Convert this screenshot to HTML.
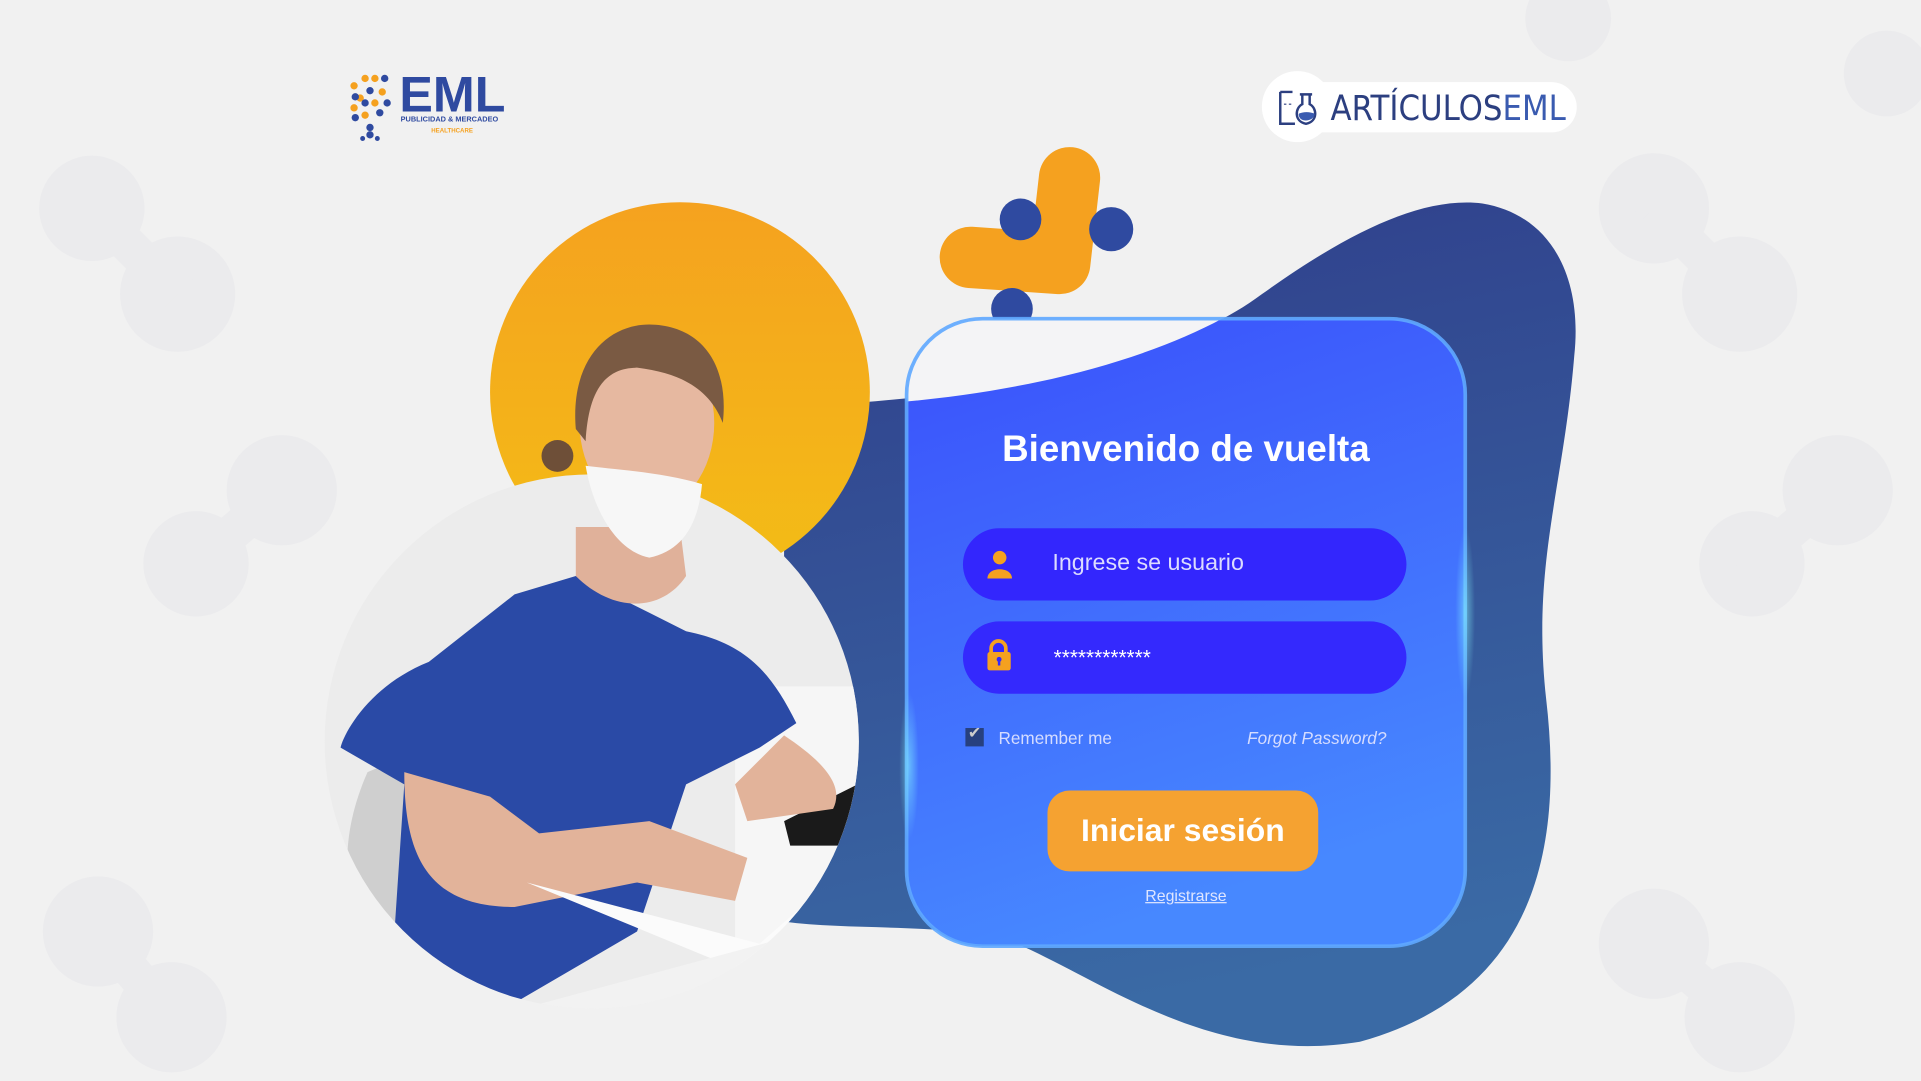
<!DOCTYPE html>
<html><head><meta charset="utf-8"><style>
html,body{margin:0;padding:0;width:1921px;height:1081px;overflow:hidden;background:#f1f1f1;}
#s{position:absolute;left:0;top:0;width:1568px;height:882px;transform:scale(1.22513,1.22562);transform-origin:0 0;font-family:"Liberation Sans",sans-serif;}
svg{position:absolute;left:0;top:0}
.t{position:absolute;color:#fff;white-space:nowrap}
</style></head><body><div id="s">
<svg width="1568" height="882" viewBox="0 0 1568 882">
<defs>
<linearGradient id="og" x1="0" y1="0" x2="0" y2="1"><stop offset="0" stop-color="#f5a21f"/><stop offset="1" stop-color="#f3bd16"/></linearGradient>
<linearGradient id="bg" x1="0" y1="0" x2="0.2" y2="1"><stop offset="0" stop-color="#2f3d8a"/><stop offset="1" stop-color="#3a6aa5"/></linearGradient>
<linearGradient id="cg" x1="0" y1="0" x2="0.3" y2="1"><stop offset="0" stop-color="#3a50fb"/><stop offset="1" stop-color="#4788ff"/></linearGradient>
<clipPath id="cc"><rect x="740" y="260" width="456" height="512" rx="62"/></clipPath>
<clipPath id="pc"><circle cx="483" cy="605" r="218"/></clipPath>
<radialGradient id="gl"><stop offset="0" stop-color="#8ff" stop-opacity=".5"/><stop offset="1" stop-color="#8ff" stop-opacity="0"/></radialGradient>
</defs>
<g fill="#ebebed" stroke="#ebebed" stroke-width="30">
<circle cx="75" cy="170" r="28"/><circle cx="145" cy="240" r="32"/><path d="M75 170 L145 240"/>
<circle cx="230" cy="400" r="30"/><circle cx="160" cy="460" r="28"/><path d="M230 400 L160 460"/>
<circle cx="80" cy="760" r="30"/><circle cx="140" cy="830" r="30"/><path d="M80 760 L140 830"/>
<circle cx="1350" cy="170" r="30"/><circle cx="1420" cy="240" r="32"/><path d="M1350 170 L1420 240"/>
<circle cx="1500" cy="400" r="30"/><circle cx="1430" cy="460" r="28"/><path d="M1500 400 L1430 460"/>
<circle cx="1350" cy="770" r="30"/><circle cx="1420" cy="830" r="30"/><path d="M1350 770 L1420 830"/>
<circle cx="1280" cy="15" r="20"/><circle cx="1540" cy="60" r="20"/>
</g>
<path d="M680 330 C800 322 950 300 1030 240 C1100 190 1160 160 1210 166 C1265 175 1292 225 1285 290 C1276 400 1250 460 1262 570 C1276 690 1255 810 1110 850 C990 870 900 800 830 770 C780 752 700 760 640 752 L640 440 Z" fill="url(#bg)"/>
<circle cx="555" cy="320" r="155" fill="url(#og)"/>
<path d="M873 145 L865 215 L792 210" stroke="#f5a11f" stroke-width="50" stroke-linecap="round" stroke-linejoin="round" fill="none"/>
<circle cx="833" cy="179" r="17" fill="#2f4aa0"/><circle cx="907" cy="187" r="18" fill="#2f4aa0"/><circle cx="826" cy="252" r="17" fill="#2f4aa0"/>
<rect x="740" y="260" width="456" height="512" rx="62" fill="url(#cg)"/>
<g clip-path="url(#cc)"><path d="M730 250 L1015 250 C950 290 850 318 735 328 Z" fill="#f4f4f6"/></g>
<rect x="740" y="260" width="456" height="512" rx="62" fill="none" stroke="#5fa8ff" stroke-width="3" opacity=".9"/>
<ellipse cx="1196" cy="500" rx="8" ry="70" fill="url(#gl)"/>
<ellipse cx="742" cy="625" rx="8" ry="60" fill="url(#gl)"/>
<g clip-path="url(#pc)"><rect x="260" y="380" width="450" height="450" fill="#ececec"/>
<rect x="600" y="560" width="110" height="270" fill="#f6f6f6"/>
<path d="M640 670 L700 640 L700 690 L645 690 Z" fill="#1a1a1a"/>
<path d="M300 630 C260 720 300 790 340 800 L380 800 L370 600 Z" fill="#cfcfcf"/>
<path d="M350 540 C300 560 280 600 278 610 L330 640 L320 790 L400 830 L520 760 L560 640 L620 610 L650 590 C630 550 610 525 560 515 L530 500 L470 470 L420 485 Z" fill="#2a4aa6"/>
<path d="M330 630 C330 700 350 740 420 740 L520 720 L600 735 L610 700 L530 670 L440 680 L400 650 Z" fill="#e2b39a"/>
<path d="M640 600 C670 620 690 640 680 660 L610 670 L600 640 Z" fill="#e2b39a"/>
<path d="M430 720 L620 770 L700 700 L700 760 L600 790 Z" fill="#fbfbfb"/>
<path d="M400 830 L660 760 L710 760 L710 830 Z" fill="#f2f2f2"/>
</g>
<path d="M470 430 L470 470 C500 500 540 500 560 470 L555 430 Z" fill="#e0b19a"/>
<ellipse cx="528" cy="345" rx="55" ry="72" fill="#e6b8a0"/>
<path d="M470 350 C465 290 500 262 535 265 C575 268 595 300 590 345 C580 320 560 305 520 300 C490 300 480 325 478 360 Z" fill="#7a5a43"/>
<circle cx="455" cy="372" r="13" fill="#6e4f38"/>
<path d="M478 380 C500 383 540 385 573 395 C570 430 555 450 530 455 C505 450 485 420 478 380 Z" fill="#f7f7f7"/>
<g transform="translate(284,60)">
<g fill="#f5a11f"><circle cx="5" cy="10" r="3"/><circle cx="14" cy="4" r="3"/><circle cx="22" cy="4" r="3"/><circle cx="10" cy="20" r="3"/><circle cx="28" cy="15" r="3"/><circle cx="5" cy="28" r="3"/><circle cx="22" cy="24" r="3"/><circle cx="14" cy="34" r="3"/></g>
<g fill="#2f4aa0"><circle cx="30" cy="4" r="3"/><circle cx="6" cy="19" r="3"/><circle cx="18" cy="14" r="3"/><circle cx="32" cy="24" r="3"/><circle cx="14" cy="24" r="3"/><circle cx="26" cy="32" r="3"/><circle cx="6" cy="36" r="3"/><circle cx="18" cy="44" r="3"/><circle cx="18" cy="50" r="3"/><circle cx="12" cy="53" r="2"/><circle cx="24" cy="53" r="2"/></g>
</g>
</svg>
<div class="t" style="left:326px;top:57px;font:bold 41px/1 'Liberation Sans',sans-serif;color:#2f4aa0">EML</div>
<div class="t" style="left:327px;top:95px;font:bold 6px 'Liberation Sans',sans-serif;color:#2f4aa0">PUBLICIDAD &amp; MERCADEO</div>
<div class="t" style="left:352px;top:104px;font:bold 5px 'Liberation Sans',sans-serif;color:#f5a11f">HEALTHCARE</div>
<div style="position:absolute;left:1035px;top:67px;width:252px;height:41px;border-radius:21px;background:#fff"></div>
<div style="position:absolute;left:1030px;top:58px;width:58px;height:58px;border-radius:50%;background:#fff"></div>
<svg style="left:1042px;top:71px" width="34" height="34" viewBox="0 0 34 34"><path d="M3 4 h10 M3 4 v26 h12" stroke="#2c3f80" stroke-width="2" fill="none"/><path d="M6 14 h8" stroke="#2c3f80" stroke-dasharray="2 2"/><path d="M19 6 h10 M21 6 v8 c-6 3 -7 14 3 16 c10 -2 9 -13 3 -16 v-8" stroke="#2c3f80" stroke-width="2" fill="none"/><path d="M18 22 c3 -2 10 -2 13 0 c0 6 -13 8 -13 0z" fill="#3a5bb0"/></svg>
<div class="t" style="left:1086px;top:72px;font:28px 'DejaVu Sans Condensed','Liberation Sans Narrow',sans-serif;color:#2c3f80">ARTÍCULOS<span style="color:#3a5bb0">EML</span></div>
<div class="t" style="left:740px;width:456px;text-align:center;top:350px;font:bold 30px 'Liberation Sans',sans-serif">Bienvenido de vuelta</div>
<div style="position:absolute;left:786px;top:431px;width:362px;height:59px;border-radius:30px;background:#3326fd"></div>
<div style="position:absolute;left:786px;top:507px;width:362px;height:59px;border-radius:30px;background:#3429fd"></div>
<svg style="left:805px;top:449px" width="22" height="24" viewBox="0 0 22 24"><circle cx="11" cy="6" r="5.5" fill="#f5a11f"/><path d="M1 23 c0 -10 20 -10 20 0z" fill="#f5a11f"/></svg>
<svg style="left:804px;top:521px" width="22" height="27" viewBox="0 0 22 27"><path d="M5 12 v-4 a6 6 0 0 1 12 0 v4" stroke="#f5a11f" stroke-width="3" fill="none"/><rect x="2" y="11" width="19" height="15" rx="2" fill="#f5a11f"/><circle cx="11.5" cy="17" r="2" fill="#3429fd"/><rect x="10.5" y="17" width="2" height="5" fill="#3429fd"/></svg>
<div class="t" style="left:859px;top:449px;font:19px 'Liberation Sans',sans-serif;color:#dcdcff">Ingrese se usuario</div>
<div class="t" style="left:860px;top:527px;font:17px 'Liberation Sans',sans-serif">************</div>
<div style="position:absolute;left:788px;top:594px;width:15px;height:15px;background:#27407f"></div>
<div class="t" style="left:790px;top:591px;font:bold 13px 'DejaVu Sans',sans-serif;color:#ccc">✔</div>
<div class="t" style="left:815px;top:594px;font:14px 'Liberation Sans',sans-serif;color:#d5dcff">Remember me</div>
<div class="t" style="left:1018px;top:594px;font:italic 14px 'Liberation Sans',sans-serif;color:#d5dcff">Forgot Password?</div>
<div style="position:absolute;left:855px;top:645px;width:221px;height:66px;border-radius:18px;background:#f5a231"></div>
<div class="t" style="left:855px;width:221px;text-align:center;top:662px;font:bold 26px 'Liberation Sans',sans-serif">Iniciar sesión</div>
<div class="t" style="left:740px;width:456px;text-align:center;top:723px;font:13px 'Liberation Sans',sans-serif;color:#dfe6ff;text-decoration:underline">Registrarse</div>
</div></body></html>
